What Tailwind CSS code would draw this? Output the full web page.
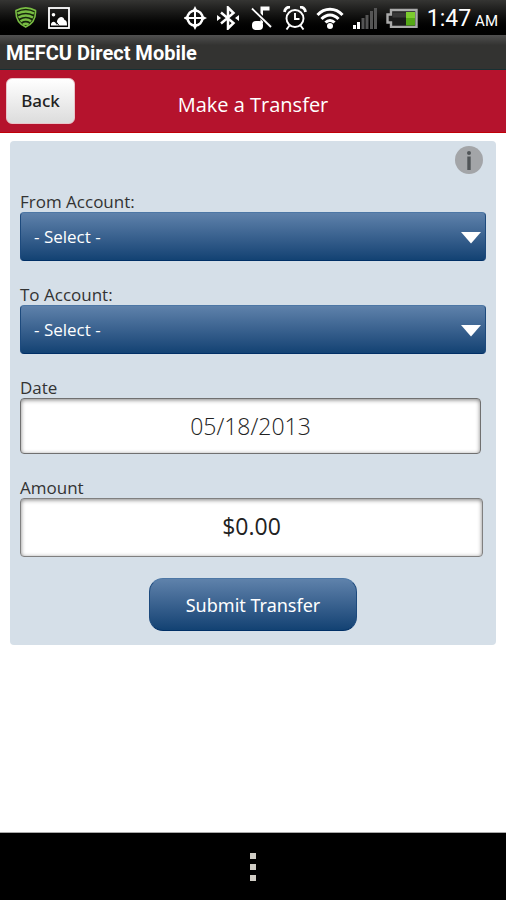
<!DOCTYPE html>
<html lang="en">
<head>
<meta charset="utf-8">
<meta name="viewport" content="width=device-width, initial-scale=1">
<title>MEFCU Direct Mobile</title>
<script src="https://cdn.jsdelivr.net/npm/@tailwindcss/browser@4"></script>
</head>
<body class="flex min-h-screen flex-col bg-white font-['Open_Sans',sans-serif]">

<!-- Status bar -->
<div class="flex h-[35px] items-center justify-between bg-linear-to-b from-[#353533] to-black pr-2 pl-[14px] font-[Roboto,sans-serif] text-white">
  <div class="flex items-center gap-[10px]">
    <svg class="h-6 w-6" viewBox="0 0 24 24" fill="none" stroke="#79bd43" stroke-width="2.4">
      <path d="M2 4.500C8 1.300 15.500 1.300 21.500 4.500C22 13 18.500 18 11.700 21C5 18 1.500 13 2 4.500Z" fill="#16240c" stroke-width="1.600"/>
      <path d="M3.500 7.500C8.500 5 15 5 20 7.500M4.500 11.500C9 9 14.500 9 19 11.500M6.500 15.200C10 13 13.500 13 17 15.200M9 18.600C11 17.300 12.500 17.300 14.500 18.600"/>
    </svg>
    <svg class="h-[22px] w-[22px]" viewBox="0 0 22 22">
      <rect x="1" y="1" width="20" height="20" fill="none" stroke="#fff" stroke-width="1.800"/>
      <circle cx="5.500" cy="7.800" r="1.800" fill="#fff"/>
      <path d="M3 18.500V17C4 14 7.500 14 8.200 17.500C9.500 17.500 8.500 16 9 14C10.500 9 15.500 8.500 16.500 13C19 13.500 19 16 19 18.500Z" fill="#fff"/>
      <path d="M8 14.500L11 18.500" stroke="#111" stroke-width="1"/>
    </svg>
  </div>
  <div class="flex items-center gap-[9px]">
    <svg class="h-6 w-6" viewBox="0 0 24 24" fill="none" stroke="#fff" stroke-width="2.500">
      <circle cx="11" cy="12" r="7.500"/>
      <path d="M11 3V21M2 12H20" stroke-width="2"/>
      <path d="M11 0L13.500 5H8.500ZM11 24L13.500 19H8.500ZM-1 12L4 9.500V14.500ZM23 12L18 9.500V14.500Z" fill="#fff" stroke="none"/>
    </svg>
    <svg class="h-6 w-6" viewBox="0 0 24 24" fill="none" stroke="#fff" stroke-width="2.500">
      <path d="M4 6.500L16.500 17L11 22.500V1.500L16.500 7L4 17.500"/>
      <path d="M0 9L4 12L0 15ZM22 9L18 12L22 15Z" fill="#fff" stroke="none"/>
    </svg>
    <svg class="h-6 w-6" viewBox="0 0 24 24">
      <path d="M10.500 0.500H19.500V4.500H13V17H10.500Z" fill="#fff"/>
      <path d="M3 3L21.500 21" stroke="#111" stroke-width="4"/>
      <path d="M2 2.500L21 21" stroke="#fff" stroke-width="1.800"/>
      <rect x="2" y="15" width="11" height="9" rx="4" fill="#fff"/>
    </svg>
    <svg class="h-6 w-6" viewBox="0 0 24 24" fill="none" stroke="#fff" stroke-width="1.900">
      <circle cx="12" cy="12.500" r="8.500"/>
      <path d="M12 7V13H16.500M6.500 19.500L3.500 23.500M17.500 19.500L20.500 23.500"/>
      <path d="M1.500 6C2 3 4 1 7 1.200M22.500 6C22 3 20 1 17 1.200" stroke-width="2.800"/>
    </svg>
    <svg class="h-6 w-7" viewBox="0 0 28 24" fill="none" stroke="#fff" stroke-width="3">
      <path d="M1.500 9C8.500 1.200 19.500 1.200 26.500 9M5.500 13C10.500 7.500 17.500 7.500 22.500 13M9.500 16.500C12 13.700 16 13.700 18.500 16.500"/>
      <circle cx="14" cy="20" r="3" fill="#fff" stroke="none"/>
    </svg>
    <svg class="h-6 w-6" viewBox="0 0 24 24" fill="#555">
      <path d="M0 19H3V23H0ZM4 16H7V23H4Z" fill="#fff"/>
      <path d="M8.500 12H11.500V23H8.500ZM12.500 9H15.500V23H12.500ZM17 5H20V23H17ZM21 2H24V23H21Z"/>
    </svg>
    <svg class="h-5 w-8" viewBox="0 0 32 20">
      <path d="M5 2H30.500V19H5V14.500H1.500V6.500H5Z" fill="#1c1c1c" stroke="#aaa" stroke-width="2.400"/>
      <rect x="6.500" y="4.500" width="14" height="5" fill="#383838"/>
      <rect x="20" y="4" width="9" height="13.500" fill="#55a916"/>
      <rect x="20" y="4" width="9" height="6" fill="#7ccb2e"/>
    </svg>
    <div class="flex items-baseline gap-1 pt-[3px]">
      <span class="text-[23px] leading-7">1:47</span><span class="text-[15px]">AM</span>
    </div>
  </div>
</div>

<!-- Application title -->
<div class="h-[35px] border-b border-[#173033] bg-linear-to-b from-[#505050] via-[#333331] via-30% to-[#333331] px-[6px] font-[Roboto,sans-serif] text-[20px] leading-[37px] font-bold text-white">MEFCU Direct Mobile</div>

<!-- Page header -->
<header class="grid h-[63px] grid-cols-[1fr_auto_1fr] items-center border-b border-[#c00008] bg-[#b5132d] px-[6px]">
  <button type="button" class="h-[46px] w-[69px] justify-self-start rounded-md border border-[#e8c5ca] bg-linear-to-b from-white to-[#dcdcdc] font-['Noto_Sans',sans-serif] text-[17px] font-medium text-[#222]">Back</button>
  <h1 class="pt-2 text-[20px] leading-6 text-white">Make a Transfer</h1>
</header>

<main class="flex-1 px-[10px] pt-2 pb-6">
  <form class="rounded-sm bg-[#d5dfe8] px-[10px] pt-[5px] pb-[14px] text-[17px] leading-5 text-[#333]">
    <div class="mb-[18px] flex justify-end pr-[3px]">
      <button type="button" aria-label="Information" class="h-7 w-7">
        <svg class="h-7 w-7" viewBox="0 0 28 28">
          <circle cx="14" cy="14" r="14" fill="#a3a5a8"/>
          <circle cx="14" cy="7" r="2" fill="#505457"/>
          <path d="M12.300 10.500H15.700V24H12.300Z" fill="#505457"/>
        </svg>
      </button>
    </div>
    <div class="flex flex-col gap-6">
      <div>
        <label for="from" class="block">From Account:</label>
        <div class="relative">
          <select id="from" class="block h-[49px] w-full appearance-none rounded border border-t-[#4d77a5] border-r-[#1d4a7d] border-b-[#002f66] border-l-[#1d4a7d] bg-linear-to-b from-[#5f82ab] to-[#124273] px-[13px] text-[17px] text-white"><option>- Select -</option></select>
          <svg class="pointer-events-none absolute top-5 right-[5px] h-3 w-5" viewBox="0 0 20 12"><path d="M0 0H20L10 11.500Z" fill="#fff"/></svg>
        </div>
      </div>
      <div>
        <label for="to" class="block">To Account:</label>
        <div class="relative">
          <select id="to" class="block h-[49px] w-full appearance-none rounded border border-t-[#4d77a5] border-r-[#1d4a7d] border-b-[#002f66] border-l-[#1d4a7d] bg-linear-to-b from-[#5f82ab] to-[#124273] px-[13px] text-[17px] text-white"><option>- Select -</option></select>
          <svg class="pointer-events-none absolute top-5 right-[5px] h-3 w-5" viewBox="0 0 20 12"><path d="M0 0H20L10 11.500Z" fill="#fff"/></svg>
        </div>
      </div>
      <div class="pr-[5px]">
        <label for="date" class="block">Date</label>
        <input id="date" type="text" value="05/18/2013" class="block h-14 w-full rounded border border-[#707070] bg-white text-center text-[23px] font-light text-[#222] shadow-[inset_0_1px_4px_#00000080]">
      </div>
      <div class="pr-[3px]">
        <label for="amount" class="block">Amount</label>
        <input id="amount" type="text" value="$0.00" class="block h-[59px] w-full rounded border border-[#808080] bg-white pb-1 text-center text-[23px] text-[#222] shadow-[inset_0_1px_4px_#00000080]">
      </div>
    </div>
    <button type="submit" class="mx-auto mt-[21px] block h-[53px] w-[208px] rounded-[14px] border border-t-[#4d77a5] border-r-[#1d4a7d] border-b-[#002f66] border-l-[#1d4a7d] bg-linear-to-b from-[#5f82ab] to-[#124273] font-['Noto_Sans',sans-serif] text-[18px] text-white">Submit Transfer</button>
  </form>
</main>

<!-- System menu bar -->
<footer class="flex h-[68px] items-center justify-center border-t border-[#aaa] bg-black">
  <button type="button" aria-label="More options" class="flex w-6 flex-col items-center gap-[5px]">
    <span class="h-[6px] w-[6px] bg-[#d0cdc5]"></span>
    <span class="h-[6px] w-[6px] bg-[#d0cdc5]"></span>
    <span class="h-[6px] w-[6px] bg-[#d0cdc5]"></span>
  </button>
</footer>
</body>
</html>
